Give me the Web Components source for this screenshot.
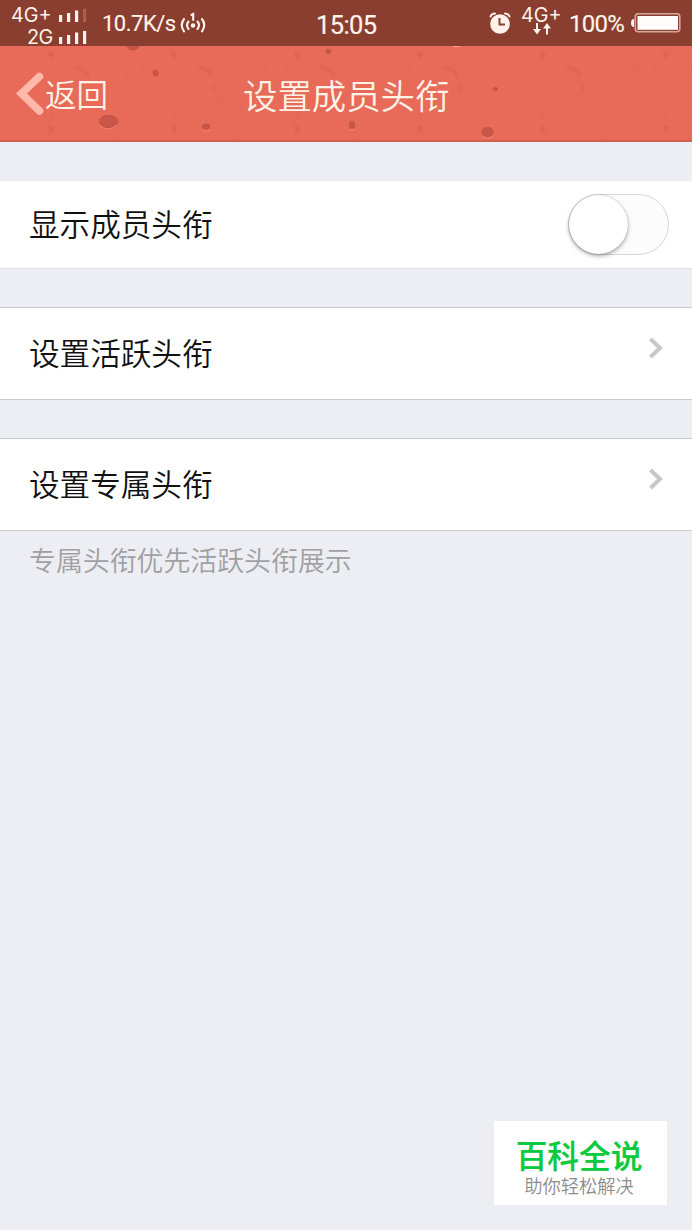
<!DOCTYPE html>
<html lang="zh-CN">
<head>
<meta charset="utf-8">
<title>设置成员头衔</title>
<style>
html,body{margin:0;height:100%;background:#edeef3}
body{font-family:"Noto Sans CJK SC",sans-serif;overflow:hidden}
</style>
</head>
<body>
<settings-page></settings-page>
<script>
function define(name, html) {
  const t = document.createElement('template');
  t.innerHTML = html;
  customElements.define(name, class extends HTMLElement {
    constructor() {
      super();
      this.attachShadow({mode: 'open'}).append(t.content.cloneNode(true));
    }
  });
}

define('signal-bars', `
<style>:host{display:block;width:28px;height:15px}svg{display:block}
:host([weak]) .last{fill:#a5604f}</style>
<svg width="28" height="15" fill="#fff3ea"><rect x="0" y="7" width="3.2" height="7"/><rect x="8" y="5" width="3.2" height="9"/><rect x="16" y="2.5" width="3.2" height="11.5"/><rect class="last" x="24" y="1" width="3.2" height="13"/></svg>`);

define('status-bar', `
<style>
:host{display:flex;height:46px;background:#893e30;color:#fff3ea;font-family:Roboto,sans-serif;box-sizing:border-box;white-space:nowrap}
.sims{width:102px;padding-top:5px;box-sizing:border-box}
.sim{display:flex;height:22px;font:19.800px/20px Inter,sans-serif}
.sim span{width:48px;margin-left:11px;letter-spacing:0}
.sim + .sim span{margin-left:27px;width:32px;letter-spacing:-.5px}
.sim signal-bars{margin-top:3px}
.speed{width:78px;font-size:22px;line-height:48px;letter-spacing:-.5px;-webkit-text-stroke:.15px}
.hot{margin-top:8px;width:28px}
.time{width:62px;margin-left:108px;font-size:25.500px;line-height:50px;letter-spacing:-.6px;-webkit-text-stroke:.2px}
.alarm{width:24px;margin:9px 0 0 110px}
.net{width:48px;margin-left:9px;padding-top:5px;font:19.800px/20px Inter,sans-serif}
.net svg{display:block;margin:-2px 0 0 11px}
.pct{width:62px;font-size:24px;line-height:48px;letter-spacing:-.7px;-webkit-text-stroke:.15px}
.bat{margin-top:12px}
svg{display:block;flex:none}
</style>
<div class="sims"><div class="sim"><span>4G+</span><signal-bars weak></signal-bars></div><div class="sim"><span>2G</span><signal-bars></signal-bars></div></div>
<div class="speed">10.7K/s</div>
<svg class="hot" width="28" height="28" fill="none" stroke="#fff3ea" stroke-width="2.1" stroke-linecap="round"><path d="M4 11Q-.5 17 4 23.500M8.500 13.500Q5.500 17 8.500 21M17.500 13.500Q20.500 17 17.500 21M22 11Q26.500 17 22 23.500M11.500 7L13.200 6V12"/><circle cx="13" cy="17.500" r="2.300" fill="#fff3ea" stroke="none"/></svg>
<div class="time">15:05</div>
<svg class="alarm" width="24" height="25"><circle cx="12" cy="15" r="9.800" fill="#fff3ea"/><path d="M2.500 7.500Q3.500 4.500 7 4.500M17 4.500Q20.500 4.500 21.500 7.500" fill="none" stroke="#fff3ea" stroke-width="2" stroke-linecap="round"/><path d="M11.500 9V15.500H17" fill="none" stroke="#893e30" stroke-width="2"/></svg>
<div class="net">4G+<svg width="22" height="14" fill="#fff3ea"><path d="M4 0h2v6h3L5 11.500 1 6h3zM14 11.500h2V5.500h3L15 0 11 5.500h3z"/></svg></div>
<div class="pct">100%</div>
<svg class="bat" width="52" height="22"><path d="M3 7Q0 7 0 11T3 15Z" fill="#fff3ea"/><rect x="4.300" y="1.800" width="44.500" height="18" rx="3" fill="none" stroke="#d6a99b" stroke-width="1.600"/><rect x="6.500" y="4" width="40.500" height="13.800" fill="#fffdfb"/></svg>`);

define('nav-bar', `
<style>
:host{display:grid;height:96px;box-sizing:border-box;border-bottom:2px solid #cf604f;background:#e86a58;color:#fff3e8;overflow:hidden}
.texture,.bar{grid-area:1/1;min-width:0}
.texture{display:block}
.bar{display:flex;z-index:1;white-space:nowrap;font-weight:350}
.arrow{display:block;margin:25px 0 0 15px}
.back{width:198px;font-size:31.5px;line-height:92px;margin-top:1px}
.title{font-size:34.400px;line-height:94px;margin-top:1px}
</style>
<svg class="texture" width="692" height="94">
<defs><filter id="soft"><feGaussianBlur stdDeviation=".8"/></filter><pattern id="grain" width="123" height="74" patternUnits="userSpaceOnUse" x="34" y="0">
<path d="M15.500 7l3 1-1.500 3zM17 67v3M41 20q4 4 8 4q5 2 5 7M57 40v4" fill="none" stroke="#cb594d" stroke-width="1.600" opacity=".65"/>
<path d="M84 17q7 5 3 14M66 38q-5 3-2 8M101 63l-5 5M38 62q9-4 14 0" fill="none" stroke="#ee7663" stroke-width="2" opacity=".3"/>
<path d="M93 29l1 3M29 56l2-1M108 20l1 3M7 22l-1 4M64 52l1 2M78 15l2 2" stroke="#d75f50" stroke-width="1.500" opacity=".4"/></pattern></defs>
<g filter="url(#soft)"><rect width="692" height="94" fill="url(#grain)"/></g>
<g fill="#c85649" stroke="#b95043" stroke-width=".8"><path d="M127 0h12q-1 4-6 4t-6-4"/><ellipse cx="155.500" cy="27" rx="2.400" ry="3"/><ellipse cx="108.500" cy="75.500" rx="9" ry="6.200"/><ellipse cx="206" cy="80.500" rx="3.700" ry="2.500"/><ellipse cx="328.500" cy="5.500" rx="2.300" ry="2.100"/><ellipse cx="352" cy="79" rx="2.600" ry="3.500"/><ellipse cx="495.500" cy="43" rx="2.200" ry="1.500"/><ellipse cx="487.500" cy="86" rx="5.500" ry="4.700"/></g>
<path d="M99 79q8 8 18 0M202 84q4 3 8 0M482 90q5 4 11 0M349 83q3 3 6 0" fill="none" stroke="#f2806d" stroke-width="1"/>
<path d="M453 0h8q-3 2-8 1" fill="#f8a08e"/>
</svg>
<div class="bar">
<svg class="arrow" width="30" height="46"><path d="M24.500 5.500L6.500 22.500 24.500 40" fill="none" stroke="#ffb9aa" stroke-width="7.600" stroke-linecap="round" stroke-linejoin="miter"/></svg>
<div class="back">返回</div><div class="title">设置成员头衔</div></div>`);

define('toggle-switch', `
<style>:host{display:block;box-sizing:border-box;width:101px;height:61px;border:1px solid #d6d6d6;border-radius:31px;background:#fcfcfc}
i{display:block;width:59px;height:59px;border-radius:50%;background:#fff;box-shadow:0 2px 4px rgba(0,0,0,.33),0 0 1px rgba(0,0,0,.3)}</style><i></i>`);

define('chevron-right', `
<style>:host{display:block}svg{display:block}</style>
<svg width="18" height="24"><path d="M3.500 3L13 12 3.500 21" fill="none" stroke="#c7c7c7" stroke-width="4"/></svg>`);

define('settings-row', `
<style>:host{display:flex;justify-content:space-between;align-items:center;box-sizing:border-box;height:93px;padding:0 27px 0 29px;background:#fff;border-top:1px solid #c9cacd;border-bottom:1px solid #c9cacd;color:#111;font-size:30.600px;font-weight:350;line-height:44px;white-space:nowrap}
:host([plain]){height:88px;padding-right:23px;border-top:0;border-bottom-color:#dfe0e3}
span{margin-top:-4px}
:host(:not([plain])) ::slotted(*){margin-top:-11px}</style>
<span><slot></slot></span><slot name="control"></slot>`);

define('brand-mark', `
<style>:host{display:block;position:absolute;left:494px;top:1121px;width:173px;height:84px;background:#fff;text-align:center;white-space:nowrap;box-sizing:border-box;padding-top:17px}
b{display:block;font-size:31.700px;line-height:32px;font-weight:500;color:#0cc93d;-webkit-text-stroke:.2px #0cc93d;text-indent:-3px}
span{display:block;margin-top:5px;font-size:18.300px;line-height:20px;font-weight:350;color:#8c8c8c;margin-right:3px}</style>
<b>百科全说</b><span>助你轻松解决</span>`);

define('settings-page', `
<style>:host{display:block;position:relative;width:692px;height:1230px;background:#edeef3;overflow:hidden}
main{display:flex;flex-direction:column;gap:38px;padding-top:39px}
p{margin:-31px 0 0 29px;color:#a0a0a2;font-size:26.900px;font-weight:350;line-height:44px;white-space:nowrap}</style>
<status-bar></status-bar><nav-bar></nav-bar>
<main><settings-row plain>显示成员头衔<toggle-switch slot="control"></toggle-switch></settings-row>
<settings-row>设置活跃头衔<chevron-right slot="control"></chevron-right></settings-row>
<settings-row>设置专属头衔<chevron-right slot="control"></chevron-right></settings-row>
<p>专属头衔优先活跃头衔展示</p></main>
<brand-mark></brand-mark>`);
</script>
</body>
</html>
